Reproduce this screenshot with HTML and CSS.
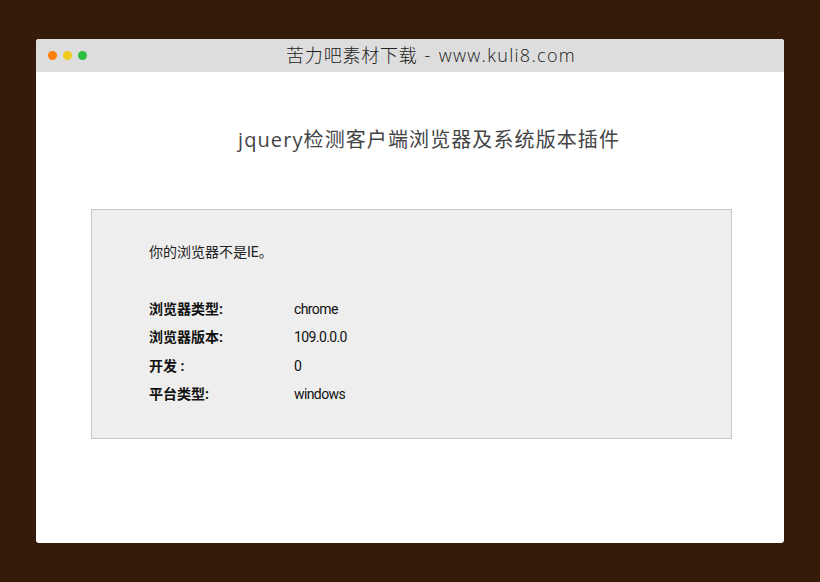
FILE: index.html
```html
<!DOCTYPE html>
<html lang="zh">
<head>
<meta charset="utf-8">
<title>jquery检测客户端浏览器及系统版本插件</title>
<link rel="stylesheet" href="styles.css">
</head>
<body>
<div class="window">
  <header class="titlebar">
    <div class="lights">
      <span class="light orange"></span>
      <span class="light yellow"></span>
      <span class="light green"></span>
    </div>
    <div class="site">苦力吧素材下载<span class="site-url"> - www.kuli8.com</span></div>
  </header>
  <main class="content">
    <h1 class="heading">jquery检测客户端浏览器及系统版本插件</h1>
    <section class="panel">
      <p class="note">你的浏览器不是IE。</p>
      <dl class="info">
        <dt>浏览器类型:</dt><dd>chrome</dd>
        <dt>浏览器版本:</dt><dd>109.0.0.0</dd>
        <dt>开发 :</dt><dd>0</dd>
        <dt>平台类型:</dt><dd>windows</dd>
      </dl>
    </section>
  </main>
</div>
</body>
</html>
```
FILE: styles.css
```css
* { box-sizing: border-box; }
html, body { height: 100%; }
body {
  margin: 0;
  padding: 39px 36px;
  background: #351c0a;
  font-family: Roboto, "Noto Sans CJK SC", sans-serif;
}
.window {
  width: 748px;
  height: 504px;
  background: #fff;
  border-radius: 3px;
  overflow: hidden;
}
.titlebar {
  position: relative;
  height: 33px;
  padding-left: 42px;
  background: #dddddd;
  display: flex;
  align-items: center;
  justify-content: center;
}
.lights {
  position: absolute;
  left: 12px;
  top: 12px;
  display: flex;
  gap: 6px;
}
.light { width: 9px; height: 9px; border-radius: 50%; }
.orange { background: #ff7f0e; }
.yellow { background: #eecb1c; }
.green { background: #2fbf3f; }
.site {
  font-family: "Open Sans", "Noto Sans CJK SC", sans-serif;
  font-weight: 300;
  font-size: 18px;
  line-height: 33px;
  letter-spacing: 0.8px;
  color: #222;
}
.site-url { letter-spacing: 1.3px; word-spacing: 1px; }
.content { padding: 52px 52px 0 55px; }
.heading {
  margin: 0 0 53px 147px;
  font-family: "Open Sans", "Noto Sans CJK SC", sans-serif;
  font-weight: 400;
  font-size: 20px;
  line-height: 32px;
  letter-spacing: 1.1px;
  color: #444;
}
.panel {
  width: 641px;
  height: 230px;
  padding: 32px 57px 0;
  background: #eeeeee;
  border: 1px solid #c8c8c8;
}
.note {
  margin: 0 0 36px;
  font-size: 14px;
  line-height: 20px;
  color: #222;
}
.info {
  margin: 0;
  display: grid;
  grid-template-columns: 145px 1fr;
  grid-auto-rows: 28.4px;
  align-items: baseline;
  font-size: 14px;
  color: #111;
}
.info dt { font-weight: 700; }
.info dd { margin: 0; letter-spacing: -0.6px; }
```
